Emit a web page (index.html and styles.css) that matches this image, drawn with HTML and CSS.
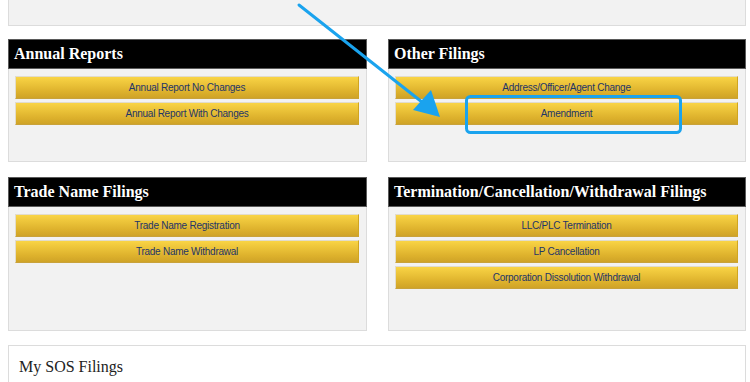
FILE: index.html
```html
<!DOCTYPE html>
<html>
<head>
<meta charset="utf-8">
<link rel="stylesheet" href="styles.css">
</head>
<body>
<div class="page">
  <div class="top-panel"></div>
  <div class="grid">
    <section class="panel row1">
      <h2 class="panel-head">Annual Reports</h2>
      <div class="panel-body">
        <a class="btn">Annual Report No Changes</a>
        <a class="btn">Annual Report With Changes</a>
      </div>
    </section>
    <section class="panel row1">
      <h2 class="panel-head">Other Filings</h2>
      <div class="panel-body">
        <a class="btn">Address/Officer/Agent Change</a>
        <a class="btn">Amendment</a>
      </div>
    </section>
    <section class="panel row2">
      <h2 class="panel-head">Trade Name Filings</h2>
      <div class="panel-body">
        <a class="btn">Trade Name Registration</a>
        <a class="btn">Trade Name Withdrawal</a>
      </div>
    </section>
    <section class="panel row2">
      <h2 class="panel-head">Termination/Cancellation/Withdrawal Filings</h2>
      <div class="panel-body">
        <a class="btn">LLC/PLC Termination</a>
        <a class="btn">LP Cancellation</a>
        <a class="btn">Corporation Dissolution Withdrawal</a>
      </div>
    </section>
  </div>
  <div class="my-panel">My SOS Filings</div>
</div>
<svg class="annotation" width="750" height="382" viewBox="0 0 750 382">
  <line x1="299" y1="5" x2="427" y2="106" stroke="#1aa3ee" stroke-width="3" stroke-linecap="round"/>
  <polygon points="440,117 413,110 431,90" fill="#1aa3ee"/>
  <rect x="466.5" y="96.5" width="214" height="36" rx="4" ry="4" fill="none" stroke="#1aa3ee" stroke-width="3"/>
</svg>
</body>
</html>
```
FILE: styles.css
```css
html, body {
  margin: 0;
  padding: 0;
  background: #fff;
  overflow: hidden;
}
.page {
  width: 738px;
  margin-left: 8px;
  display: flex;
  flex-direction: column;
}
.top-panel {
  height: 25px;
  background: #f2f2f2;
  border: 1px solid #dcdcdc;
  border-top: none;
}
.grid {
  margin-top: 13px;
  display: grid;
  grid-template-columns: 359px 358px;
  column-gap: 21px;
  row-gap: 15px;
}
.panel {
  background: #f2f2f2;
  border: 1px solid #dcdcdc;
  box-sizing: border-box;
  display: flex;
  flex-direction: column;
}
.row1 { height: 123px; }
.row2 { height: 154px; }
.panel-head {
  margin: -1px -1px 0 -1px;
  height: 30px;
  box-sizing: border-box;
  background: #000;
  border: 1px solid #5a5a5a;
  color: #fff;
  font-family: "Liberation Serif", serif;
  font-weight: bold;
  font-size: 16px;
  line-height: 28px;
  padding-left: 5px;
  white-space: nowrap;
}
.panel-body {
  padding: 7px 7px 0 6px;
  display: flex;
  flex-direction: column;
  gap: 3px;
}
.btn {
  display: block;
  height: 23px;
  box-sizing: border-box;
  border: 1px solid #e2dccb;
  border-right-color: #d0a520;
  border-bottom-color: #c9a23a;
  background: linear-gradient(#f9d445, #ddb12c 70%, #cfa327);
  color: #1e3568;
  font-family: "Liberation Sans", Arial, sans-serif;
  font-size: 10px;
  letter-spacing: -0.25px;
  line-height: 21px;
  text-align: center;
}
.my-panel {
  margin-top: 14px;
  height: 36px;
  border: 1px solid #dcdcdc;
  border-bottom: none;
  background: #fff;
  font-family: "Liberation Serif", serif;
  font-size: 16px;
  padding: 12px 0 0 10px;
  color: #222;
}
.annotation {
  position: absolute;
  left: 0;
  top: 0;
  pointer-events: none;
}
```
